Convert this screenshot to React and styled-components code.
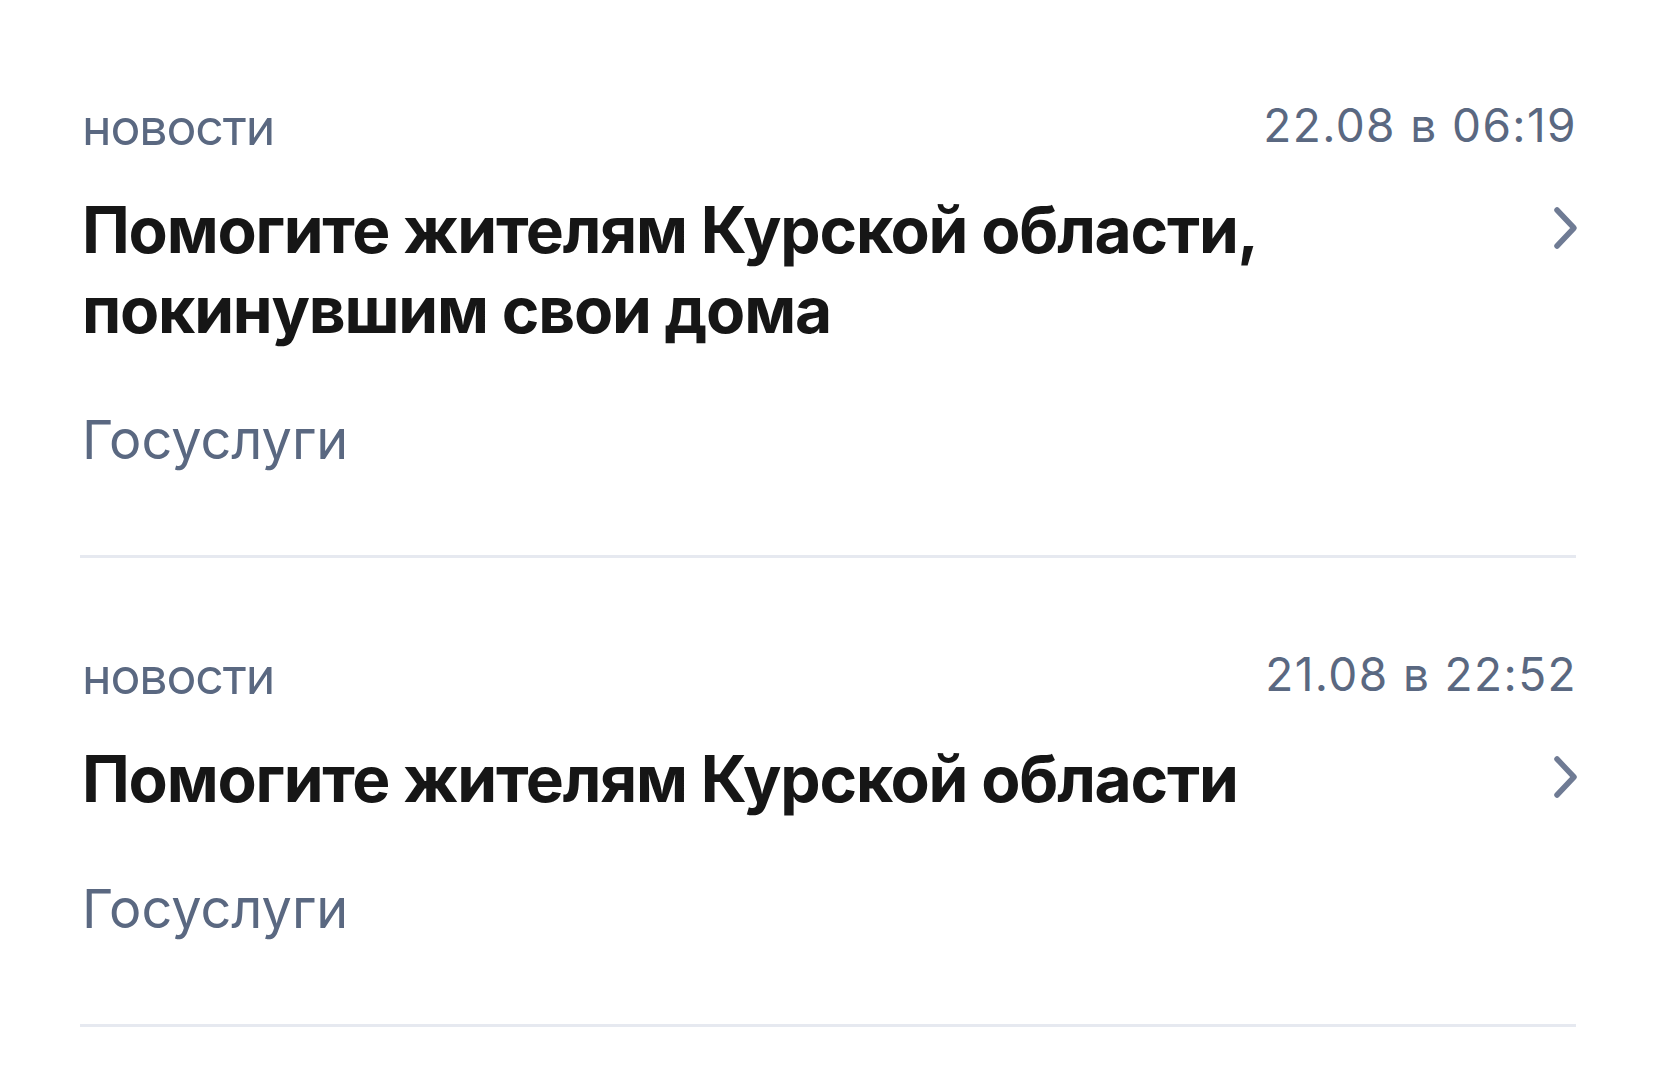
import styled, { createGlobalStyle } from "styled-components";

const GlobalStyle = createGlobalStyle`
  body {
    margin: 0;
    background: #ffffff;
    font-family: Inter, "Noto Sans", sans-serif;
  }
`;

const news = [
  { category: "новости", date: "22.08 в 06:19", title: "Помогите жителям Курской области, покинувшим свои дома", source: "Госуслуги" },
  { category: "новости", date: "21.08 в 22:52", title: "Помогите жителям Курской области", source: "Госуслуги" },
];

function Chevron() {
  return (
    <svg width="28" height="46" viewBox="0 0 28 46" fill="none">
      <polyline points="6,5 23,23 6,41" stroke="#6f7b94" strokeWidth="5.5" strokeLinecap="round" strokeLinejoin="round" />
    </svg>
  );
}

export default function App() {
  return (
    <>
      <GlobalStyle />
      <List>
        {news.map((item, i) => (
          <Item key={i}>
            <Meta>
              <Category>{item.category}</Category>
              <Date>{item.date}</Date>
            </Meta>
            <TitleRow>
              <Title>{item.title}</Title>
              <Arrow>
                <Chevron />
              </Arrow>
            </TitleRow>
            <Source>{item.source}</Source>
          </Item>
        ))}
      </List>
    </>
  );
}

const List = styled.div`
  padding: 9px 80px 0 80px;
`;

const Item = styled.div`
  padding: 88px 0 82px 2px;
  border-bottom: 3px solid #e6e9f0;
`;

const Meta = styled.div`
  display: flex;
  justify-content: space-between;
  align-items: flex-start;
`;

const Category = styled.span`
  font-size: 50px;
  line-height: 60px;
  color: #5a6881;
  letter-spacing: -1.1px;
`;

const Date = styled.span`
  font-size: 46px;
  line-height: 56px;
  color: #5a6881;
  letter-spacing: 1.4px;
  margin-right: -1px;
`;

const TitleRow = styled.div`
  display: flex;
  justify-content: space-between;
  align-items: flex-start;
  margin-top: 33px;
`;

const Title = styled.div`
  font-size: 64px;
  line-height: 80px;
  font-weight: 700;
  color: #161616;
  letter-spacing: -1.2px;
  max-width: 1260px;
`;

const Arrow = styled.div`
  height: 80px;
  display: flex;
  align-items: center;
  margin-top: -2px;
  margin-right: -3px;
`;

const Source = styled.div`
  margin-top: 57px;
  font-size: 54px;
  line-height: 66px;
  color: #5a6881;
`;
